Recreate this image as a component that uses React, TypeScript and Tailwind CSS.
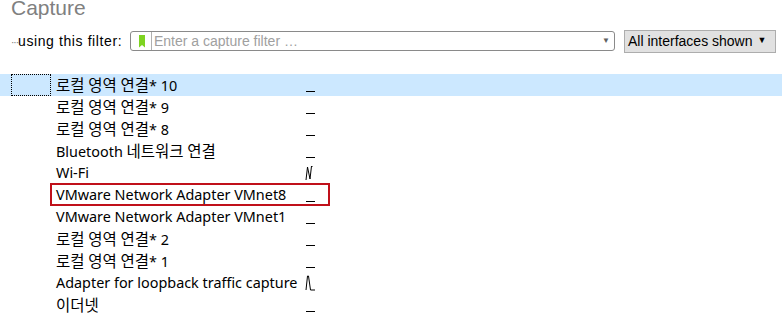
import React from 'react';

type Spark = 'flat' | 'wifi' | 'loop';

const rows: { name: string; spark: Spark }[] = [
    { name: '로컬 영역 연결* 10', spark: 'flat' },
    { name: '로컬 영역 연결* 9', spark: 'flat' },
    { name: '로컬 영역 연결* 8', spark: 'flat' },
    { name: 'Bluetooth 네트워크 연결', spark: 'flat' },
    { name: 'Wi-Fi', spark: 'wifi' },
    { name: 'VMware Network Adapter VMnet8', spark: 'flat' },
    { name: 'VMware Network Adapter VMnet1', spark: 'flat' },
    { name: '로컬 영역 연결* 2', spark: 'flat' },
    { name: '로컬 영역 연결* 1', spark: 'flat' },
    { name: 'Adapter for loopback traffic capture', spark: 'loop' },
    { name: '이더넷', spark: 'flat' },
];

// hangul runs are drawn a bit larger, like Malgun Gothic next to Segoe UI
function Name({ text }: { text: string }) {
    const parts = text.split(/([\uAC00-\uD7A3]+)/);
    return (
        <>
            {parts.map((p, i) =>
                /[\uAC00-\uD7A3]/.test(p) ? <span key={i} className="text-[15.5px]">{p}</span> : <React.Fragment key={i}>{p}</React.Fragment>
            )}
        </>
    );
}

function Sparkline({ kind }: { kind: Spark }) {
    let points = '2,17.5 11,17.5';
    if (kind === 'wifi') points = '2,18 3.5,5 6,17 7.5,4 8.5,5';
    if (kind === 'loop') points = '2,18 3.5,4 4.5,4 6.5,18 11,18';
    return (
        <svg width="14" height="22" viewBox="0 0 14 22" className="overflow-visible">
            <polyline points={points} fill="none" stroke="#000" strokeWidth="1" />
        </svg>
    );
}

function App() {
    return (
        <div className="w-[782px] h-[332px] overflow-hidden bg-white relative" style={{ fontFamily: '"Liberation Sans", Arial, sans-serif' }}>
            <div className="pl-[11px] text-[21px] leading-[15px] text-[#808080] h-[26px]">Capture</div>

            <div className="flex items-center h-[26px] mt-[2px] pl-[11px]">
                <span className="w-[112px] text-[14px] tracking-[0.6px] text-black whitespace-nowrap">
                    <span className="text-[#777] text-[10px] tracking-[-1px]">···</span>using this filter:
                </span>
                <div className="ml-[7px] w-[485px] h-[20px] border border-[#8a8a8a] rounded-[3px] flex items-center bg-white">
                    <div className="ml-[8px] w-[6px] h-[13px] bg-[#7ed321] [clip-path:polygon(0_0,100%_0,100%_100%,50%_80%,0_100%)]" />
                    <div className="ml-[6px] w-px h-[18px] bg-[#b0b0b0]" />
                    <span className="ml-[2px] text-[14px] text-[#a0a0a0] flex-1 whitespace-nowrap">Enter a capture filter …</span>
                    <span className="mr-[4px] text-[8px] text-[#606060]">▼</span>
                </div>
                <div className="ml-[9px] w-[152px] h-[23px] bg-[#e1e1e1] border border-[#adadad] flex items-center pl-[3px] text-[14px] text-black whitespace-nowrap">
                    All interfaces shown
                    <span className="ml-[5px] text-[9px]">▼</span>
                </div>
            </div>

            <div className="mt-[20px]" style={{ fontFamily: '"Noto Sans", "Noto Sans CJK KR", sans-serif' }}>
                {rows.map((row, i) => (
                    <div key={i} className={`relative flex items-center h-[22px] pl-[11px] ${i === 0 ? 'bg-[#cce8ff]' : ''}`}>
                        <div className={`w-[40px] h-[22px] shrink-0 ${i === 0 ? 'border border-dotted border-black' : ''}`} />
                        <div className="w-[250px] pl-[5px] text-[14.4px] leading-[22px] text-black whitespace-nowrap">
                            <Name text={row.name} />
                        </div>
                        <div className="h-[22px] pl-[3px]">
                            <Sparkline kind={row.spark} />
                        </div>
                        {i === 5 && (
                            <div className="absolute left-[50px] top-[-1px] w-[280px] h-[23px] border-2 border-[#c0101a] pointer-events-none" />
                        )}
                    </div>
                ))}
            </div>
        </div>
    );
}

export default App;
